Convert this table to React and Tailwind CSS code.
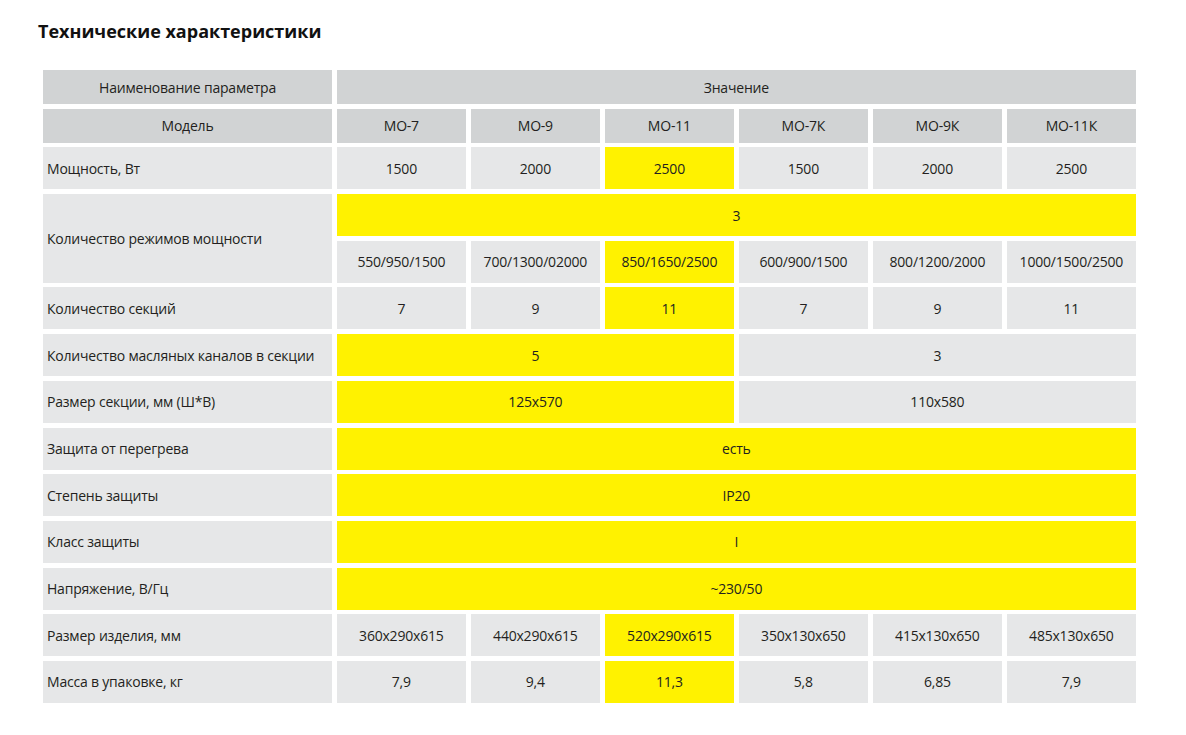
import React from 'react';

const models = ['МО-7', 'МО-9', 'МО-11', 'МО-7К', 'МО-9К', 'МО-11К'];

// each row: label + cells [{ text, span, yellow }]
const rows = [
    { label: 'Мощность, Вт', cells: ['1500', '2000', { text: '2500', yellow: true }, '1500', '2000', '2500'] },
    { label: 'Количество секций', cells: ['7', '9', { text: '11', yellow: true }, '7', '9', '11'] },
    { label: 'Количество масляных каналов в секции', cells: [{ text: '5', span: 3, yellow: true }, { text: '3', span: 3 }] },
    { label: 'Размер секции, мм (Ш*В)', cells: [{ text: '125x570', span: 3, yellow: true }, { text: '110x580', span: 3 }] },
    { label: 'Защита от перегрева', cells: [{ text: 'есть', span: 6, yellow: true }] },
    { label: 'Степень защиты', cells: [{ text: 'IP20', span: 6, yellow: true }] },
    { label: 'Класс защиты', cells: [{ text: 'I', span: 6, yellow: true }] },
    { label: 'Напряжение, В/Гц', cells: [{ text: '~230/50', span: 6, yellow: true }] },
    { label: 'Размер изделия, мм', cells: ['360x290x615', '440x290x615', { text: '520x290x615', yellow: true }, '350x130x650', '415x130x650', '485x130x650'] },
    { label: 'Масса в упаковке, кг', cells: ['7,9', '9,4', { text: '11,3', yellow: true }, '5,8', '6,85', '7,9'] },
];

const spanClass = { 1: 'col-span-1', 3: 'col-span-3', 6: 'col-span-6' };

const Cell = ({ cell }) => {
    const c = typeof cell === 'string' ? { text: cell } : cell;
    return (
        <div className={`${spanClass[c.span || 1]} h-[42px] flex items-center justify-center ${c.yellow ? 'bg-[#fff200]' : 'bg-[#e6e7e8]'}`}>
            {c.text}
        </div>
    );
};

const Label = ({ children, className = '' }) => (
    <div className={`bg-[#e6e7e8] flex items-center pl-[4px] ${className}`}>{children}</div>
);

export default function App() {
    const modes = ['550/950/1500', '700/1300/02000', { text: '850/1650/2500', yellow: true }, '600/900/1500', '800/1200/2000', '1000/1500/2500'];

    return (
        <div className="bg-white w-[1186px] h-[735px] text-[#231f20] text-[14px]" style={{ fontFamily: '"Open Sans", "Noto Sans", sans-serif' }}>
            <h1 className="pl-[38px] pt-[19px] text-[18px] font-bold leading-[24px] text-[#111]">Технические характеристики</h1>

            <div className="ml-[43px] mt-[27px] w-[1093px] grid grid-cols-[289px_repeat(6,1fr)] gap-[4.7px] tracking-[-0.2px]">
                {/* header */}
                <div className="h-[34px] bg-[#d1d3d4] flex items-center justify-center">Наименование параметра</div>
                <div className="col-span-6 h-[34px] bg-[#d1d3d4] flex items-center justify-center">Значение</div>
                <div className="h-[34px] bg-[#d1d3d4] flex items-center justify-center">Модель</div>
                {models.map((m) => (
                    <div key={m} className="h-[34px] bg-[#d1d3d4] flex items-center justify-center">{m}</div>
                ))}

                {/* power */}
                <Label className="h-[42px]">{rows[0].label}</Label>
                {rows[0].cells.map((c, i) => <Cell key={i} cell={c} />)}

                {/* power modes, two rows */}
                <Label className="row-span-2">Количество режимов мощности</Label>
                <Cell cell={{ text: '3', span: 6, yellow: true }} />
                {modes.map((c, i) => <Cell key={i} cell={c} />)}

                {rows.slice(1).map((r) => (
                    <React.Fragment key={r.label}>
                        <Label className="h-[42px]">{r.label}</Label>
                        {r.cells.map((c, i) => <Cell key={i} cell={c} />)}
                    </React.Fragment>
                ))}
            </div>
        </div>
    );
}
